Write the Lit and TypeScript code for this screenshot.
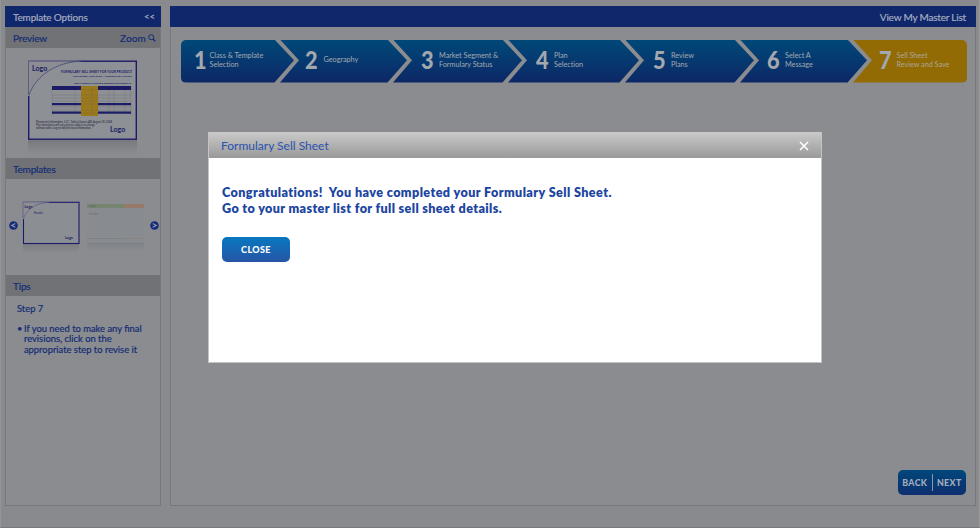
import { LitElement, html, svg, css } from "lit";
import { customElement } from "lit/decorators.js";

interface Step { n: string; lines: string[]; w: number; pad: number; gap: number }

const STEPS: Step[] = [
  { n: "1", lines: ["Class & Template", "Selection"], w: 113, pad: 13, gap: 0.5 },
  { n: "2", lines: ["Geography"], w: 127, pad: 25, gap: 3.5 },
  { n: "3", lines: ["Market Segment &", "Formulary Status"], w: 129, pad: 28, gap: 3 },
  { n: "4", lines: ["Plan", "Selection"], w: 131, pad: 28, gap: 3 },
  { n: "5", lines: ["Review", "Plans"], w: 129, pad: 28, gap: 3 },
  { n: "6", lines: ["Select A", "Message"], w: 127, pad: 27, gap: 3 },
  { n: "7", lines: ["Sell Sheet", "Review and Save"], w: 114, pad: 26, gap: 2.5 },
];

@customElement("step-bar")
class StepBar extends LitElement {
  static styles = css`
    :host { display: flex; height: 43px; border-radius: 5px; overflow: hidden; }
    .step {
      box-sizing: border-box; display: flex; align-items: center; flex: none;
      margin-right: -14px; color: #a3a8af;
      background: linear-gradient(#004878, #06386f 50%, #0d2766);
      clip-path: polygon(0 0, calc(100% - 19.5px) 0, 100% 48%, calc(100% - 19.5px) 100%, 0 100%, 19px 48%);
    }
    .first { clip-path: polygon(0 0, calc(100% - 19.5px) 0, 100% 48%, calc(100% - 19.5px) 100%, 0 100%); }
    .last {
      background: #926b04; margin-right: 0; color: #aaa695;
      clip-path: polygon(0 0, 100% 0, 100% 100%, 0 100%, 19px 48%);
    }
    .num {
      font: 900 25px/38px Lato, sans-serif; width: 15px; flex: none; margin-bottom: 4px; color: #a3a8af;
      transform: scaleX(0.87); transform-origin: left;
    }
    .label { font-size: 7.3px; line-height: 9px; white-space: nowrap; margin-bottom: 3px; letter-spacing: -0.04px; }
  `;
  render() {
    return STEPS.map((s, i) => html`
      <div class="step ${i === 0 ? "first" : i === 6 ? "last" : ""}"
        style="width:${s.w}px;padding-left:${s.pad}px;gap:${s.gap}px">
        <span class="num">${s.n}</span>
        <span class="label">${s.lines.map((l) => html`<div>${l}</div>`)}</span>
      </div>`);
  }
}

const arrow = (d: string) => html`<svg class="arrow" width="9" height="9" viewBox="0 0 9 9">
  <circle cx="4.5" cy="4.5" r="4.3" fill="#132b78" />
  <path d=${d} fill="none" stroke="#8e93a5" stroke-width="1.2" /></svg>`;

@customElement("app-root")
class AppRoot extends LitElement {
  static styles = css`
    :host {
      display: block; position: relative; box-sizing: border-box; width: 980px; height: 528px;
      overflow: hidden; background: #898a8e; color: #152d75;
      font-family: Lato, "Noto Sans", sans-serif;
    }
    .page {
      display: flex; gap: 9px; height: 528px; box-sizing: border-box; padding: 6px 3px 21px 4px;
      border-left: 1px solid #949598; border-right: 1px solid #9b9b9a; border-bottom: 1px solid #78797d;
    }
    .side, .main { box-sizing: border-box; border: 1px solid #77787c; background: #8b8c90; }
    .side { width: 156px; flex: none; }
    .main { flex: 1; min-width: 0; display: flex; flex-direction: column; }
    .head, .bar { display: flex; align-items: center; justify-content: space-between; box-sizing: border-box; }
    .head { background: #10286b; color: #a4abc0; height: 21px; margin: -1px -1px 0; padding: 0 6px 0 8px; font-size: 10px; }
    .bar { background: #717276; height: 21px; padding: 0 4px 0 7px; font-size: 10px; }
    .text { -webkit-text-stroke: 0.2px currentColor; white-space: nowrap; }
    .head .text, .bar .text { letter-spacing: -0.18px; }
    .chev { font-weight: 700; font-size: 9.5px; }
    .zoom { display: flex; align-items: center; gap: 2px; }
    .bar .zoom { letter-spacing: 0.15px; }
    .preview { height: 110px; }
    .templates { height: 96px; display: flex; align-items: center; padding: 0 1px 0 3px; }
    .art { flex: 1; }
    svg { display: block; }
    .arrow { flex: none; margin-top: -4px; }
    .tips { padding: 7px 10px 0 11px; font-size: 9.4px; line-height: 12px; }
    .tip { display: flex; gap: 1.5px; margin-top: 9px; line-height: 10.3px; font-size: 9.4px; }
    .head.mainhead { justify-content: flex-end; padding-right: 10px; font-size: 10px; }
    .mainhead .text { letter-spacing: -0.2px; }
    .steps { padding: 12.5px 8px 0 10px; }
    .nav {
      margin: auto 9px 10px auto; display: flex; align-items: center; width: 68px; height: 25px;
      border-radius: 5px; background: linear-gradient(#00477b, #0e2e70);
      font-size: 8.8px; font-weight: 900; color: #a5adb9;
    }
    .nav span { flex: 1; text-align: center; white-space: nowrap; letter-spacing: 0.4px; }
    .nav i { width: 1px; height: 17px; background: #8d97a5; }
    .dialog {
      position: absolute; left: 208px; top: 132px; width: 614px; height: 231px; box-sizing: border-box;
      background: #fff; border: 1px solid #c4c4c6; border-top: 0;
    }
    .title {
      display: flex; justify-content: space-between; align-items: center; height: 26px; box-sizing: border-box;
      padding: 1px 12px 0; background: linear-gradient(#cacaca, #999); color: #2a53ae; font-size: 12px;
    }
    .msg { margin: 27px 0 0 13px; font-size: 12.6px; line-height: 15.5px; font-weight: 800; color: #1c459f; white-space: nowrap; }
    .l1 { letter-spacing: 0.41px; }
    .l2 { letter-spacing: 0.37px; }
    .close {
      display: block; margin: 21px 0 0 13px; width: 68px; height: 25px; padding: 0; border: 0; border-radius: 5px;
      background: linear-gradient(#0878c0, #2754a6); color: #fff; font: 900 9px Lato, sans-serif; letter-spacing: 0.4px;
    }
  `;

  previewArt() {
    const rows = [95, 98, 101, 107, 110];
    const cols = [52, 75, 98, 109, 114, 125, 131];
    return html`<svg width="154" height="110" viewBox="6 48 154 110" font-family="Lato, sans-serif" fill="#1b1c65">
      <defs><linearGradient id="sh" x2="0" y2="1"><stop stop-color="#77797d" /><stop offset="1" stop-color="#8b8c90" /></linearGradient></defs>
      <rect x="28" y="140" width="109" height="14" fill="url(#sh)" />
      <rect x="28.7" y="61.2" width="107.6" height="78" fill="#8d9095" stroke="#1c1a68" stroke-width="1.4" />
      <path d="M27.5 96V60.5H80C57 62 36 75 29.5 96Z" fill="#8b8d92" />
      <path d="M28.5 95V61.2H80" fill="none" stroke="#5c5d82" stroke-width="1" />
      <path d="M29 95C36 75 57 62 81 61.2" fill="none" stroke="#4d4f78" stroke-width=".9" />
      <g font-size="7.1" font-weight="700"><text x="32" y="71">Logo</text><text x="110" y="132">Logo</text></g>
      <g font-weight="900" font-size="2.9">
        <text x="61" y="73.2" textLength="71">FORMULARY SELL SHEET FOR YOUR PRODUCT</text>
        <text x="73" y="76.6" textLength="59" font-size="2.6">Morristown, New Jersey - FORMULARY ACCESS</text>
        <text x="74" y="83.6" textLength="57" font-size="2.6">Your Product is covered without restrictions in</text>
      </g>
      <g stroke="#74777f" stroke-width=".5" fill="none">
        ${rows.map((y) => svg`<path d="M52 ${y}H131" />`)}
        ${cols.map((x) => svg`<path d="M${x} 87V115" />`)}
      </g>
      <rect x="52" y="86" width="79" height="4" />
      <rect x="52" y="103" width="79" height="2.2" /><rect x="52" y="111.5" width="79" height="2.2" />
      <rect x="81" y="86" width="17" height="30" fill="#9b791d" />
      <path d="M81 89.5H98M81 95H98M81 98H98M81 101H98M81 104H98M81 110H98M81 113H98M92 87V115" stroke="#86702f" stroke-width=".6" />
      <g font-size="2.7" fill="#25263c">
        <text x="36" y="123.4" textLength="76">Pharmacist Information, LLC - Tablets Source/AB, August 18, 2008</text>
        <text x="36" y="126.4" textLength="59">Plan formularies will vary and are subject to change</text>
        <text x="36" y="129.4" textLength="55">without notice. Log on daily for latest information.</text>
      </g>
    </svg>`;
  }

  templateArt() {
    return html`<svg class="art" width="132" height="96" viewBox="18 179 132 96" font-family="Lato, sans-serif" fill="#1b1c65">
      <defs><linearGradient id="s2" x2="0" y2="1"><stop stop-color="#7b7d81" /><stop offset="1" stop-color="#8b8c90" /></linearGradient></defs>
      <rect x="23" y="244" width="56" height="9" fill="url(#s2)" />
      <rect x="23.5" y="202.3" width="55.5" height="41.2" fill="#8b8f94" stroke="#1c1a68" stroke-width="1.1" />
      <path d="M22.5 219V201.5H50C37 203 28 208 23.8 219Z" fill="#8b8d92" />
      <path d="M23 218V202H48M23.5 218C28 208 37 203 49 202.3" fill="none" stroke="#60628a" stroke-width=".8" />
      <text x="24.5" y="207.6" font-size="3.7" font-weight="700">Logo</text>
      <text x="34" y="214.4" font-size="2.8">Header</text>
      <text x="65" y="239.3" font-size="3.7" font-weight="700">Logo</text>
      <rect x="87" y="203.5" width="57" height="46" fill="#888c90" />
      <rect x="87" y="204" width="37" height="4" fill="#75856f" /><rect x="124" y="204" width="20" height="4" fill="#967967" />
      <text x="89" y="207.4" font-size="3.2" fill="#5b685d">Logo</text>
      <text x="89" y="214.5" font-size="3" fill="#686c75">Header</text>
      <path d="M87 238.5H124M87 243.5H144" stroke="#797d80" stroke-width=".7" /><path d="M124 238.5H144" stroke="#907e73" stroke-width=".7" />
      <rect x="87" y="244" width="57" height="8" fill="url(#s2)" opacity=".5" />
    </svg>`;
  }

  render() {
    return html`
      <div class="page">
        <div class="side">
          <div class="head"><span class="text">Template Options</span><span class="chev">&lt;&lt;</span></div>
          <div class="bar"><span class="text">Preview</span>
            <span class="zoom text">Zoom <svg width="8" height="8" viewBox="0 0 8 8" fill="none" stroke="#152d75"><circle cx="3.2" cy="3.2" r="2.5" /><path d="M5 5L7.3 7.3" stroke-width="1.3" /></svg></span></div>
          <div class="preview">${this.previewArt()}</div>
          <div class="bar"><span class="text">Templates</span></div>
          <div class="templates">${arrow("M6.3 2.5L2.7 4.4L6.3 6.3")}${this.templateArt()}${arrow("M2.7 2.5L6.3 4.4L2.7 6.3")}</div>
          <div class="bar"><span class="text">Tips</span></div>
          <div class="tips">
            <div class="text">Step 7</div>
            <div class="tip text"><span>•</span><span>If you need to make any final<br />revisions, click on the<br />appropriate step to revise it</span></div>
          </div>
        </div>
        <div class="main">
          <div class="head mainhead"><span class="text">View My Master List</span></div>
          <div class="steps"><step-bar></step-bar></div>
          <div class="nav"><span>BACK</span><i></i><span>NEXT</span></div>
        </div>
      </div>
      <div class="dialog">
        <div class="title"><span>Formulary Sell Sheet</span>
          <svg width="10" height="10" viewBox="0 0 10 10" stroke="#fff" stroke-width="1.5"><path d="M1 1L9 9M9 1L1 9" /></svg></div>
        <div class="msg"><div class="l1">Congratulations!&nbsp; You have completed your Formulary Sell Sheet.</div><div class="l2">Go to your master list for full sell sheet details.</div></div>
        <button class="close">CLOSE</button>
      </div>`;
  }
}
